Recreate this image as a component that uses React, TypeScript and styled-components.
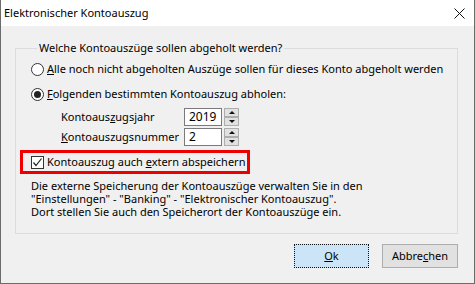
import React from "react";
import styled, { createGlobalStyle } from "styled-components";

const GlobalStyle = createGlobalStyle`
  html, body {
    margin: 0;
    padding: 0;
    background: #ffffff;
  }
  * {
    box-sizing: border-box;
  }
`;

const App = () => {
  return (
    <>
      <GlobalStyle />
      <Window>
        <TitleBar>
          <Title>Elektronischer Kontoauszug</Title>
          <CloseIcon width="11" height="11" viewBox="0 0 11 11">
            <path d="M0.5 0.5 L10.5 10.5 M10.5 0.5 L0.5 10.5" stroke="#111" strokeWidth="1" />
          </CloseIcon>
        </TitleBar>
        <Body>
          <Group>
            <Legend>Welche Kontoauszüge sollen abgeholt werden?</Legend>
            <OptionRow $top={3}>
              <Radio />
              <Label>
                <U>A</U>lle noch nicht abgeholten Auszüge sollen für dieses Konto abgeholt werden
              </Label>
            </OptionRow>
            <OptionRow $top={5}>
              <Radio $checked />
              <Label>
                <U>F</U>olgenden bestimmten Kontoauszug abholen:
              </Label>
            </OptionRow>
            <FieldRow $top={4}>
              <FieldLabel>
                Kontoaus<U>z</U>ugsjahr
              </FieldLabel>
              <Spin>
                <SpinInput>2019</SpinInput>
                <SpinButtons>
                  <SpinButton>
                    <Arrow $up />
                  </SpinButton>
                  <SpinButton>
                    <Arrow />
                  </SpinButton>
                </SpinButtons>
              </Spin>
            </FieldRow>
            <FieldRow $top={2}>
              <FieldLabel>
                <U>K</U>ontoauszugsnummer
              </FieldLabel>
              <Spin>
                <SpinInput>2</SpinInput>
                <SpinButtons>
                  <SpinButton>
                    <Arrow $up />
                  </SpinButton>
                  <SpinButton>
                    <Arrow />
                  </SpinButton>
                </SpinButtons>
              </Spin>
            </FieldRow>
            <Highlight>
              <CheckBox>
                <svg width="11" height="11" viewBox="0 0 11 11">
                  <polyline points="1.5,5.5 4,8.5 9.5,1.5" fill="none" stroke="#222" strokeWidth="1.2" />
                </svg>
              </CheckBox>
              <Label>
                Kontoauszug auch <U>e</U>xtern abspeichern
              </Label>
            </Highlight>
            <Description>
              <Line>Die externe Speicherung der Kontoauszüge verwalten Sie in den</Line>
              <Line>"Einstellungen" - "Banking" - "Elektronischer Kontoauszug".</Line>
              <Line>Dort stellen Sie auch den Speicherort der Kontoauszüge ein.</Line>
            </Description>
          </Group>
          <ButtonRow>
            <Button $primary>
              <U>O</U>k
            </Button>
            <Button>
              Abbre<U>c</U>hen
            </Button>
          </ButtonRow>
        </Body>
      </Window>
    </>
  );
};

export default App;

const Window = styled.div`
  width: 475px;
  height: 284px;
  display: flex;
  flex-direction: column;
  border: 1px solid #6b6b6b;
  border-top: none;
  font-family: "Noto Sans", "Open Sans", sans-serif;
  font-size: 11px;
  color: #000;
`;

const TitleBar = styled.div`
  height: 26px;
  background: #ffffff;
  display: flex;
  align-items: center;
  justify-content: space-between;
  padding: 0 9px 0 3px;
`;

const Title = styled.div`
  font-size: 11px;
  line-height: 16px;
  color: #000;
`;

const CloseIcon = styled.svg`
  display: block;
`;

const Body = styled.div`
  flex: 1;
  background: #f0f0f0;
  display: flex;
  flex-direction: column;
  padding: 14px 16px 14px 14px;
`;

const Group = styled.fieldset`
  margin: 0;
  padding: 0 0 15px 15px;
  border: 1px solid #dcdcdc;
  min-width: 0;
`;

const Legend = styled.legend`
  margin-left: 6px;
  padding: 0 2px;
  line-height: 16px;
`;

const U = styled.span`
  text-decoration: underline;
`;

const OptionRow = styled.div<{ $top: number }>`
  height: 20px;
  margin-top: ${(p) => p.$top}px;
  display: flex;
  align-items: center;
  gap: 3px;
`;

const Label = styled.span`
  line-height: 16px;
  white-space: nowrap;
`;

const Radio = styled.span<{ $checked?: boolean }>`
  width: 13px;
  height: 13px;
  border-radius: 50%;
  border: 1px solid #333;
  background: #fff;
  display: flex;
  align-items: center;
  justify-content: center;
  flex: none;

  &::after {
    content: "";
    width: 7px;
    height: 7px;
    border-radius: 50%;
    background: ${(p) => (p.$checked ? "#222" : "transparent")};
  }
`;

const FieldRow = styled.div<{ $top: number }>`
  height: 18px;
  margin-top: ${(p) => p.$top}px;
  margin-left: 30px;
  display: flex;
  align-items: center;
`;

const FieldLabel = styled.span`
  width: 123px;
  line-height: 16px;
  white-space: nowrap;
`;

const Spin = styled.div`
  display: flex;
  align-items: center;
  gap: 2px;
`;

const SpinInput = styled.div`
  width: 38px;
  height: 18px;
  border: 1px solid #7a7a7a;
  background: #fff;
  padding-left: 4px;
  line-height: 16px;
  font-size: 12px;
`;

const SpinButtons = styled.div`
  display: flex;
  flex-direction: column;
`;

const SpinButton = styled.div`
  width: 15px;
  height: 9px;
  border: 1px solid #adadad;
  background: #e1e1e1;
  display: flex;
  align-items: center;
  justify-content: center;
`;

const Arrow = styled.span<{ $up?: boolean }>`
  width: 0;
  height: 0;
  border-left: 3px solid transparent;
  border-right: 3px solid transparent;
  ${(p) => (p.$up ? "border-bottom: 3px solid #111;" : "border-top: 3px solid #111;")}
`;

const Highlight = styled.div`
  width: 230px;
  height: 24px;
  margin-top: 4px;
  margin-left: -11px;
  border: 3px solid #ee0000;
  padding-left: 8px;
  display: flex;
  align-items: center;
  gap: 3px;
`;

const CheckBox = styled.span`
  width: 13px;
  height: 13px;
  border: 1px solid #333;
  background: #fff;
  display: flex;
  align-items: center;
  justify-content: center;
  flex: none;

  svg {
    display: block;
  }
`;

const Description = styled.div`
  margin-top: 5px;
  display: flex;
  flex-direction: column;
`;

const Line = styled.div`
  height: 13px;
  line-height: 13px;
  white-space: nowrap;
`;

const ButtonRow = styled.div`
  display: flex;
  justify-content: flex-end;
  gap: 13px;
  margin-top: 10px;
`;

const Button = styled.div<{ $primary?: boolean }>`
  width: ${(p) => (p.$primary ? "75px" : "76px")};
  height: 24px;
  display: flex;
  align-items: center;
  justify-content: center;
  background: ${(p) => (p.$primary ? "#cce4f7" : "#e1e1e1")};
  border: 1px ${(p) => (p.$primary ? "dotted #111" : "solid #adadad")};
  line-height: 16px;
`;
